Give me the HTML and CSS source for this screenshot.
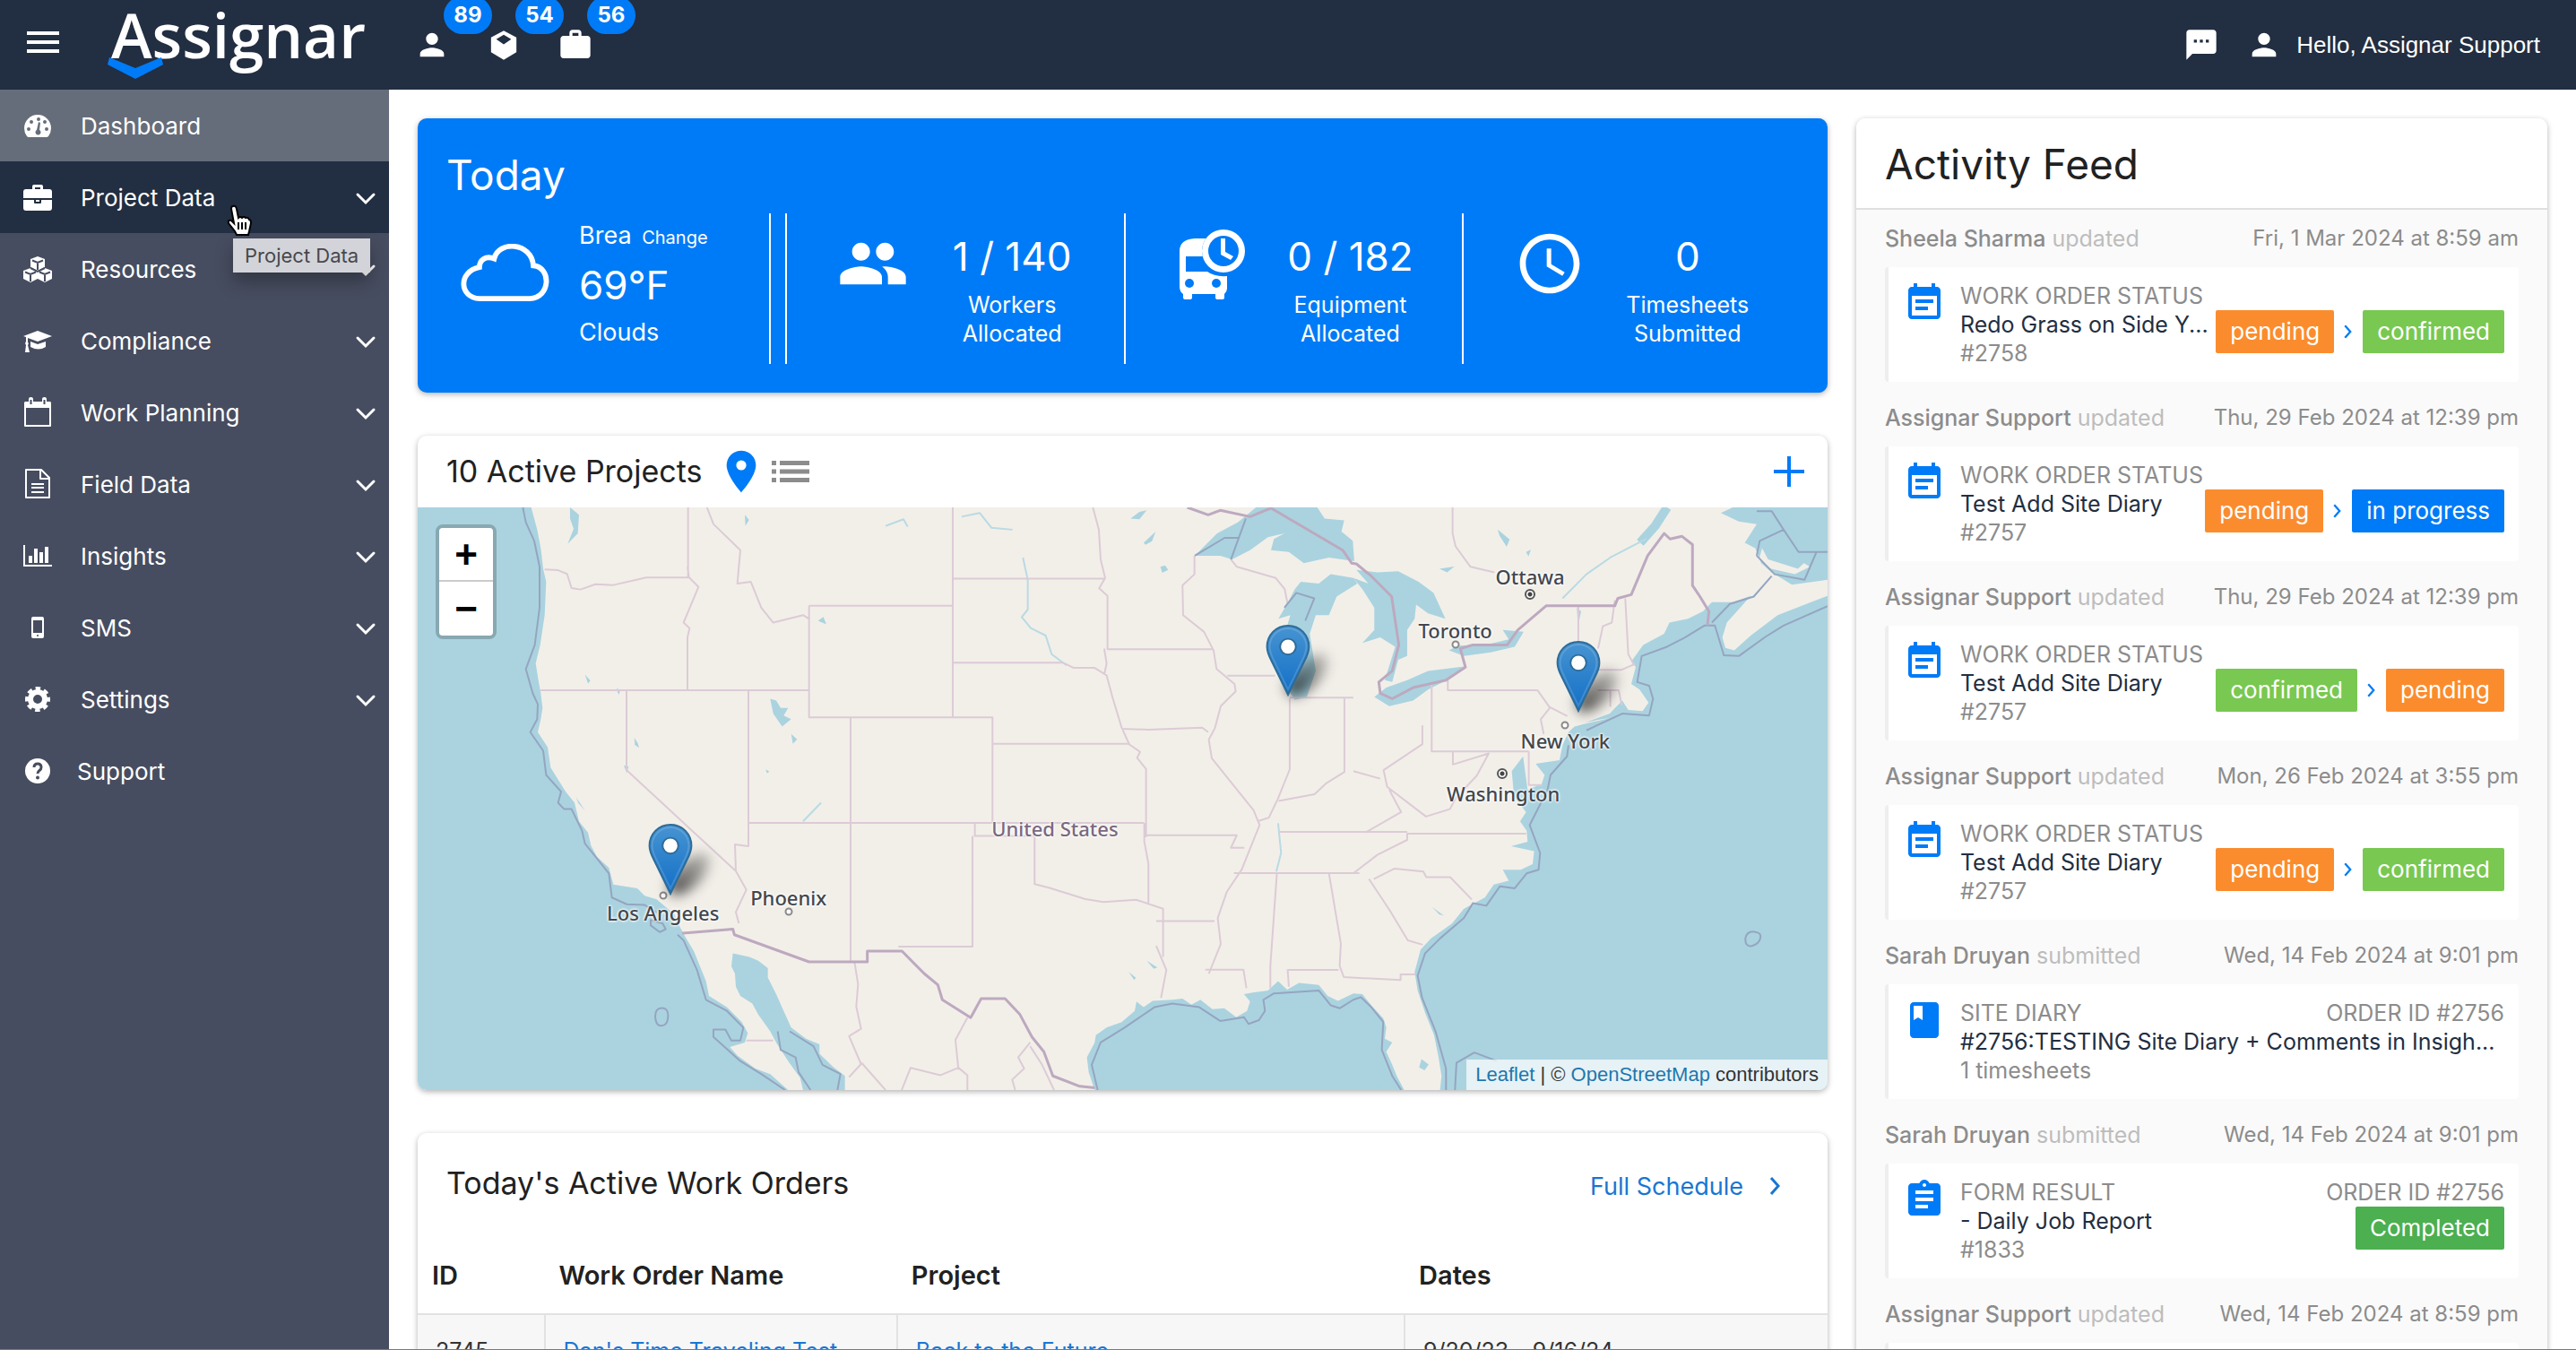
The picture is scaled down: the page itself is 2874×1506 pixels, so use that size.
FILE: index.html
```html
<!DOCTYPE html>
<html lang="en">

<head>
    <meta charset="UTF-8">
    <meta name="viewport" content="width=device-width, initial-scale=1.0">
    <title>Assignar Dashboard</title>
    <link rel="stylesheet" href="styles.css">
</head>

<body>

    <!-- Icon sprite -->
    <svg class="sprite" aria-hidden="true">
        <symbol id="menu" viewBox="0 0 24 24"><path d="M3 18h18v-2H3v2zm0-5h18v-2H3v2zm0-7v2h18V6H3z"/></symbol>
        <symbol id="person" viewBox="0 0 24 24"><path d="M12 12c2.21 0 4-1.79 4-4s-1.79-4-4-4-4 1.79-4 4 1.79 4 4 4zm0 2c-2.67 0-8 1.34-8 4v2h16v-2c0-2.66-5.33-4-8-4z"/></symbol>
        <symbol id="box" viewBox="0 0 24 24"><path d="M12 2.500 20.500 7v10L12 22 3.500 17V7zM12 5.200 7 8.300l5 3.400 5-3.400z" fill-rule="evenodd"/></symbol>
        <symbol id="bag" viewBox="0 0 24 24"><path d="M20 6h-4V4c0-1.110-.89-2-2-2h-4c-1.110 0-2 .89-2 2v2H4c-1.110 0-2 .89-2 2v11c0 1.110.89 2 2 2h16c1.110 0 2-.89 2-2V8c0-1.110-.89-2-2-2zm-6 0h-4V4h4v2z"/></symbol>
        <symbol id="chat" viewBox="0 0 24 24"><path d="M20 2H4c-1.100 0-1.990.9-1.990 2L2 22l4-4h14c1.100 0 2-.9 2-2V4c0-1.100-.9-2-2-2zM9 10.500H7v-2h2v2zm4 0h-2v-2h2v2zm4 0h-2v-2h2v2z"/></symbol>
        <symbol id="chevron-down" viewBox="0 0 24 16"><path d="M3 3l9 9 9-9" fill="none" stroke="currentColor" stroke-width="3" stroke-linecap="round"/></symbol>
        <symbol id="chevron-right" viewBox="0 0 16 24"><path d="M3 3l8 9-8 9" fill="none" stroke="currentColor" stroke-width="3"/></symbol>
        <symbol id="group" viewBox="0 0 24 24"><path d="M16 11c1.660 0 2.990-1.340 2.990-3S17.660 5 16 5c-1.660 0-3 1.340-3 3s1.340 3 3 3zm-8 0c1.660 0 2.990-1.340 2.990-3S9.660 5 8 5C6.340 5 5 6.340 5 8s1.340 3 3 3zm0 2c-2.330 0-7 1.170-7 3.500V19h14v-2.500c0-2.330-4.670-3.500-7-3.500zm8 0c-.29 0-.62.02-.97.05 1.160.84 1.970 1.970 1.970 3.450V19h6v-2.500c0-2.330-4.670-3.500-7-3.500z"/></symbol>
        <symbol id="clock" viewBox="0 0 24 24"><path d="M11.990 2C6.470 2 2 6.480 2 12s4.470 10 9.990 10C17.520 22 22 17.520 22 12S17.520 2 11.990 2zM12 20c-4.420 0-8-3.580-8-8s3.580-8 8-8 8 3.580 8 8-3.580 8-8 8zM12.500 7H11v6l5.250 3.150.75-1.230-4.500-2.670z"/></symbol>
        <symbol id="bus" viewBox="2 0 80 80">
            <path d="M6 26q0-13 17-14h14v20H13v17h24q8 6 22 5v14q0 3-3 6v4q0 2-3 2h-4q-3 0-3-2v-4H20v4q0 2-3 2h-4q-3 0-3-2v-4q-4-3-4-8z"/>
            <circle class="hole" cx="17" cy="62" r="5"/><circle class="hole" cx="47" cy="62" r="5"/>
            <circle class="hole" cx="55" cy="26" r="24"/>
            <path d="M55 2a24 24 0 100 48 24 24 0 000-48zm0 7a17 17 0 110 34 17 17 0 010-34zM52 12v18l11 6 3-4-9-5V12z" fill-rule="evenodd"/>
        </symbol>
        <symbol id="cloud" viewBox="0 0 104 68"><path d="M23 63h58c24-1 25-36 4-38C83-2 45-4 40 17 30 13 23 19 23 27-2 32 0 62 23 63z" fill="none" stroke="currentColor" stroke-width="6"/></symbol>
        <symbol id="place" viewBox="0 0 24 24"><path d="M12 2C8.130 2 5 5.130 5 9c0 5.250 7 13 7 13s7-7.750 7-13c0-3.870-3.130-7-7-7zm0 9.400A2.400 2.400 0 1112 6.600a2.400 2.400 0 010 4.800z"/></symbol>
        <symbol id="list" viewBox="0 0 42 24"><path d="M0 0h5v5H0zM9 0h33v5H9zM0 9.500h5v5H0zM9 9.500h33v5H9zM0 19h5v5H0zM9 19h33v5H9z"/></symbol>
        <symbol id="plus" viewBox="0 0 34 34"><path d="M15 0h4v15h15v4H19v15h-4V19H0v-4h15z"/></symbol>
        <symbol id="event" viewBox="0 0 24 24"><path d="M17 10H7v2h10v-2zm2-7h-1V1h-2v2H8V1H6v2H5c-1.110 0-1.990.9-1.990 2L3 19c0 1.100.89 2 2 2h14c1.100 0 2-.9 2-2V5c0-1.100-.9-2-2-2zm0 16H5V8h14v11zm-5-5H7v2h7v-2z"/></symbol>
        <symbol id="diary" viewBox="0 0 24 24"><path d="M18 2H6c-1.100 0-2 .9-2 2v16c0 1.100.9 2 2 2h12c1.100 0 2-.9 2-2V4c0-1.100-.9-2-2-2zM6 4h5v8l-2.500-1.500L6 12V4z"/></symbol>
        <symbol id="form" viewBox="0 0 24 24"><path d="M19 3h-4.180C14.400 1.840 13.300 1 12 1c-1.300 0-2.400.84-2.820 2H5c-1.100 0-2 .9-2 2v14c0 1.100.9 2 2 2h14c1.100 0 2-.9 2-2V5c0-1.100-.9-2-2-2zm-7 0c.55 0 1 .45 1 1s-.45 1-1 1-1-.45-1-1 .45-1 1-1zm2 14H7v-2h7v2zm3-4H7v-2h10v2zm0-4H7V7h10v2z"/></symbol>
        <symbol id="marker" viewBox="0 0 50 82">
            <path d="M25 1C11 1 1 12 1 25c0 7 3 12 6 18l18 37 18-37c3-6 6-11 6-18C49 12 39 1 25 1z" fill="url(#pin)" stroke="#2e6c97" stroke-width="2"/>
            <path d="M25 4C13 4 4 14 4 25c0 6 2 10 5 16l16 33 16-33c3-6 5-10 5-16C46 14 37 4 25 4z" fill="none" stroke="#fff" stroke-opacity=".15" stroke-width="2"/>
            <circle cx="25" cy="25" r="9" fill="#fff" stroke="#2e6c97" stroke-width="2"/>
        </symbol>
        <linearGradient id="pin" x1="0" y1="0" x2="0" y2="1"><stop offset="0" stop-color="#4794d2"/><stop offset="1" stop-color="#126fc6"/></linearGradient>
        <symbol id="gauge" viewBox="0 0 32 32">
            <path d="M16 4a15 15 0 00-15 15q0 5 3 9 1 1 2 1h20q1 0 2-1 3-4 3-9A15 15 0 0016 4z"/>
            <path class="hole" d="M15 9a2 2 0 114 0 2 2 0 01-4 0zM7 12a2 2 0 114 0 2 2 0 01-4 0zM22 12a2 2 0 114 0 2 2 0 01-4 0zM4 20a2 2 0 114 0 2 2 0 01-4 0zM24 20a2 2 0 114 0 2 2 0 01-4 0zM17 12l2 1-1 8a3 3 0 11-3 0z"/>
        </symbol>
        <symbol id="case" viewBox="0 0 32 32"><path d="M3 7h7V4q0-2 2-2h8q2 0 2 2v3h7q3 0 3 3v7H0v-7q0-3 3-3zm10 0h6V5h-6zM0 19h12v3q0 1 1 1h6q1 0 1-1v-3h12v9q0 3-3 3H3q-3 0-3-3zm14 0h4v2h-4z" fill-rule="evenodd"/></symbol>
        <symbol id="cubes" viewBox="0 0 32 32">
            <path d="M16 2l8 3v9l-8 4-8-4V5zM8 15l8 3v9l-8 4-8-4v-9zM24 15l8 3v9l-8 4-8-4v-9z"/>
            <path class="cut" d="M10 6.500l6 2.500 6-2.500M16 9v8M2 19.500L8 22l6-2.500M8 22v8M18 19.500l6 2.500 6-2.500M24 22v8M8 15l8 4 8-4"/>
        </symbol>
        <symbol id="cap" viewBox="0 0 32 32"><path d="M16 5l16 6-16 6-11-4v5l1 1-1 2 2 8H2l1-8-1-2 1-2v-5L0 11zM8 17l8 3 9-3v6q-8 5-17 0z"/></symbol>
        <symbol id="calendar" viewBox="0 0 32 36"><path d="M2 6h4V3q0-2 2.500-2T11 3v3h10V3q0-2 2.500-2T26 3v3h4q1 0 1 2v25q0 1-1 1H2q-1 0-1-1V8q0-2 1-2zm1 7v19h26V13z" fill-rule="evenodd"/><path class="cut" d="M8.500 4v5M23.500 4v5"/></symbol>
        <symbol id="doc" viewBox="0 0 32 36"><path d="M3 2h17l9 9v22H3zM19 2v10h10M9 18h14M9 22h14M9 27h14" fill="none" stroke="currentColor" stroke-width="2" stroke-linejoin="round"/></symbol>
        <symbol id="chart" viewBox="0 0 32 32"><path d="M0 4h2v22h30v2H0zM6 16h4v8H6zM12 8h4v16h-4zM18 12h4v12h-4zM24 6h4v18h-4z"/></symbol>
        <symbol id="phone" viewBox="0 0 32 32"><path d="M11 4h10q2 0 2 2v20q0 2-2 2H11q-2 0-2-2V6q0-2 2-2zm0 4v14h10V8zm5 16a1 1 0 100 2 1 1 0 000-2z" fill-rule="evenodd"/></symbol>
        <symbol id="gear" viewBox="0 0 32 32"><g fill="none" stroke="currentColor"><circle cx="16" cy="16" r="8" stroke-width="6"/><circle cx="16" cy="16" r="12" stroke-width="4" stroke-dasharray="5.400 4.025" stroke-dashoffset="2.700"/></g></symbol>
        <symbol id="help" viewBox="0 0 32 32"><circle cx="16" cy="16" r="14"/><path class="cut help-hook" d="M12 12q0-4 4-4t4 4q0 2-2 3.500t-2 3.500"/><circle class="hole" cx="16" cy="23.500" r="2"/></symbol>
    </svg>

    <header class="topbar">
        <button class="icon-button" type="button" aria-label="Toggle menu"><svg class="menu-icon"><use href="#menu"/></svg></button>
        <a class="logo" href="#">Assignar
            <svg class="logo-mark" viewBox="0 0 62 24" aria-hidden="true"><path d="M2 0l29 12L60 0l2 8-31 16L0 8z"/></svg>
        </a>
        <nav class="counters" aria-label="Counters">
            <a class="counter" href="#" aria-label="Workers"><svg class="counter-icon"><use href="#person"/></svg><span class="badge">89</span></a>
            <a class="counter" href="#" aria-label="Equipment"><svg class="counter-icon"><use href="#box"/></svg><span class="badge">54</span></a>
            <a class="counter" href="#" aria-label="Projects"><svg class="counter-icon"><use href="#bag"/></svg><span class="badge">56</span></a>
        </nav>
        <div class="account">
            <button class="icon-button" type="button" aria-label="Messages"><svg class="counter-icon"><use href="#chat"/></svg></button>
            <a class="user" href="#"><svg class="counter-icon"><use href="#person"/></svg>Hello, Assignar Support</a>
        </div>
    </header>

    <div class="layout">
        <nav class="sidebar" aria-label="Main">
            <a class="nav-item current" href="#"><svg class="nav-icon"><use href="#gauge"/></svg><span class="nav-label">Dashboard</span></a>
            <a class="nav-item hover" href="#"><svg class="nav-icon"><use href="#case"/></svg><span class="nav-label">Project Data</span><svg class="nav-arrow"><use href="#chevron-down"/></svg>
                <svg class="pointer" viewBox="0 0 30 36" aria-hidden="true"><path d="M8 2q3-1 4 3l2 10q2-2 4 0 2-2 4 0 3-1 4 2 2 0 2 4l-2 9-1 4H12l-2-4-7-9q-1-4 3-3l3 3L6 5q0-3 2-3z"/><path d="M14 20v8M18 20v8M22 20v8"/></svg>
                <span class="tooltip" role="tooltip">Project Data</span>
            </a>
            <a class="nav-item" href="#"><svg class="nav-icon"><use href="#cubes"/></svg><span class="nav-label">Resources</span><svg class="nav-arrow"><use href="#chevron-down"/></svg></a>
            <a class="nav-item" href="#"><svg class="nav-icon"><use href="#cap"/></svg><span class="nav-label">Compliance</span><svg class="nav-arrow"><use href="#chevron-down"/></svg></a>
            <a class="nav-item" href="#"><svg class="nav-icon tall"><use href="#calendar"/></svg><span class="nav-label">Work Planning</span><svg class="nav-arrow"><use href="#chevron-down"/></svg></a>
            <a class="nav-item" href="#"><svg class="nav-icon tall"><use href="#doc"/></svg><span class="nav-label">Field Data</span><svg class="nav-arrow"><use href="#chevron-down"/></svg></a>
            <a class="nav-item" href="#"><svg class="nav-icon"><use href="#chart"/></svg><span class="nav-label">Insights</span><svg class="nav-arrow"><use href="#chevron-down"/></svg></a>
            <a class="nav-item" href="#"><svg class="nav-icon"><use href="#phone"/></svg><span class="nav-label">SMS</span><svg class="nav-arrow"><use href="#chevron-down"/></svg></a>
            <a class="nav-item" href="#"><svg class="nav-icon"><use href="#gear"/></svg><span class="nav-label">Settings</span><svg class="nav-arrow"><use href="#chevron-down"/></svg></a>
            <a class="nav-item support" href="#"><svg class="nav-icon"><use href="#help"/></svg><span class="nav-label">Support</span></a>
        </nav>

        <main class="content">
            <div class="column">

                <section class="card today">
                    <h2 class="today-title">Today</h2>
                    <div class="today-row">
                        <div class="weather">
                            <svg class="cloud"><use href="#cloud"/></svg>
                            <div class="weather-text">
                                <p class="place">Brea <a class="change" href="#">Change</a></p>
                                <p class="temp">69°F</p>
                                <p class="sky">Clouds</p>
                            </div>
                        </div>
                        <div class="stats">
                            <div class="stat">
                                <svg class="stat-icon"><use href="#group"/></svg>
                                <div class="stat-text"><p class="stat-value">1 / 140</p><p class="stat-label">Workers<br>Allocated</p></div>
                            </div>
                            <div class="stat">
                                <svg class="stat-icon"><use href="#bus"/></svg>
                                <div class="stat-text"><p class="stat-value">0 / 182</p><p class="stat-label">Equipment<br>Allocated</p></div>
                            </div>
                            <div class="stat">
                                <svg class="stat-icon"><use href="#clock"/></svg>
                                <div class="stat-text"><p class="stat-value">0</p><p class="stat-label">Timesheets<br>Submitted</p></div>
                            </div>
                        </div>
                    </div>
                </section>

                <section class="card projects">
                    <div class="projects-head">
                        <h2 class="card-title">10 Active Projects</h2>
                        <button class="view-button active" type="button" aria-label="Map view"><svg class="place-icon"><use href="#place"/></svg></button>
                        <button class="view-button" type="button" aria-label="List view"><svg class="list-icon"><use href="#list"/></svg></button>
                        <button class="view-button active add" type="button" aria-label="Add project"><svg class="plus-icon"><use href="#plus"/></svg></button>
                    </div>
                    <div class="map">
                        <svg class="map-tiles" viewBox="0 0 4719 1568" preserveAspectRatio="none" aria-hidden="true">
                            <path class="land" d="M380 0L400 60 412 110 420 165 430 200 425 290 410 370 395 420 405 470 412 500 418 540 412 570 402 605 435 645 445 700 495 765 525 795 540 845 570 875 580 910 600 940 640 970 655 1015 735 1025 760 1045 800 1055 830 1075 860 1095 875 1125 895 1155 925 1195 945 1235 965 1275 975 1315 1035 1345 1085 1385 1105 1415 1095 1440 1045 1452 1070 1475 1130 1510 1180 1525 1240 1568H1290L1280 1535 1240 1490 1200 1440 1180 1410 1140 1365 1120 1335 1080 1315 1065 1290 1062 1255 1050 1235 1055 1200 1110 1210 1140 1220 1172 1240 1172 1265 1200 1310 1225 1355 1250 1400 1300 1430 1345 1445 1345 1470 1390 1505 1430 1530V1568
                                H2266L2246 1520 2240 1480 2266 1440 2270 1420 2306 1400 2356 1385 2400 1355 2406 1330 2430 1345 2460 1328 2526 1325 2560 1322 2590 1338 2620 1325 2660 1350 2700 1348 2740 1372 2776 1355 2786 1330 2766 1310 2800 1305 2846 1300 2880 1275 2910 1298 2950 1280 3016 1285 3046 1315 3080 1328 3132 1308
                                3162 1310 3192 1340 3232 1375 3242 1400 3237 1430 3262 1440 3242 1465 3262 1500 3277 1530 3302 1568H3422L3427 1530 3417 1480 3402 1420 3372 1360 3347 1300 3337 1250 3357 1190 3392 1160 3462 1120 3502 1080 3572 1050 3602 1015 3652 1005 3632 975 3692 975 3732 960 3737 925 3660 912 3715 900 3712 870 3690 845 3710 820 3670 780 3662 710 3700 670 3715 760 3762 745 3772 720 3742 690 3822 680 3832 640 3852 605 3872 590 3990 555 4032 520 4052 545 4100 548 4120 525 4090 490 4062 475 4077 430 4062 415 4102 370 4172 340 4190 310 4252 300 4302 280
                                4332 255 4402 255 4462 238 4382 310 4367 350 4377 378 4407 385 4462 345 4552 290 4719 238V195L4600 208 4532 175 4497 150 4477 110 4442 95 4482 45 4422 38 4362 15 4402 0Z"/>
                            <path class="land" d="M4500 110L4520 140 4620 165 4640 150 4660 160 4610 180 4530 165 4490 140zM3870 590L3990 567 3950 572 3850 588z"/>
                            <path class="water" d="M2601 130L2676 70 2746 40 2806 0H3011L3036 30 3101 35 3092 65 3130 90 3135 145 3050 135 2966 150 2916 120 2856 115 2866 85 2901 70 2846 80 2786 115 2726 140 2686 130z"/>
                            <path class="water" d="M2881 300L2910 260 2936 220 2956 200 3016 205 3056 180 3132 190 3145 205 3076 240 3050 290 3006 290 2986 340 2996 390 3006 440 2976 510 2936 518 2906 480 2896 420 2906 330 2921 290z"/>
                            <path class="water" d="M3132 190L3182 205 3142 168 3212 175 3282 172 3350 200 3400 230 3440 300 3382 285 3342 262 3337 300 3312 330 3312 400 3282 410 3262 470 3237 465 3272 375 3222 350 3162 365 3202 330 3202 270 3162 220z"/>
                            <path class="water" d="M3202 510L3242 485 3312 465 3382 440 3502 428 3452 462 3382 490 3332 520 3252 535zM3452 385L3482 372 3572 370 3652 355 3632 330 3702 335 3672 375 3592 390 3502 400zM1180 515L1200 520 1215 540 1240 540 1225 560 1250 570 1220 590 1190 555z"/>
                            <path class="water" d="M725 620l12 15 4 12-14-8zM1165 705l12 6-8 5zM1250 610l20 14-14 12zM1340 305l18-10 10 20zM1095 20l14 14-12 16zM2386 30l30-18 24-4-24 24zM2430 95l40-30-12 26-22 10zM2486 160l16-4 10 12-20 8zM560 450l18 16-8 8zM665 488l14 2-6 14zM690 695l16 2-6 18zM530 780l30 36-22-20zM3360 1485l24 14-14 16-18-8zM3395 1075l40 24-16-4zM2440 1220l36 18-12 4zM2380 1250l24 16-6 6zM510 0l30 20-4 50-34 28 20-40-12-28zM3880 270l14 10-10 40zM3615 60l40 26-10 20-24-30zM3710 120l16-6-8 18zM3420 165l50-6-24 16z"/>
                            <path class="river wide" d="M4182 0L4142 50 4092 95"/>
                            <path class="river" d="M4112 85L3992 135 3912 180 3832 245M2026 135l16 60 0 80-20 20 30 30 50 20 20 50 50 30M1821 25l60-10 40 40 70 5M1566 50l60-18 14 20M1290 845l60-50M2880 850l10 80-16 50"/>
                            <path class="state" d="M425 167l45 2 30 10 15 38 30 4 50-14 60 2 110-20h140V0M903 160l5 28 32 26-50 96 20 15-7 25v142M410 492h900M699 492v215l366 272M1107 492v420l-45-5 3 72 35 50-35 60 10 30M1310 265v300h139M1310 265h481M1310 300l-20-10-100 20-40-40-35-70-45 5 10-90-90-70-22-45M1449 565v658M1107 849h1324M1449 565h475v284M1791 0v565M1791 192h510M1791 418h370M2260 0l20 60 6 80 15 50-20 28 28 20v144h355M2298 380l8 40-8 30M2161 418l35 14h70l40 20 20 60 30 80 26 46 36 20-10 16 30 30v184M2356 596l90 2 180-5 20 12M1924 636h460M1865 849v35h200v130l50 10 120 30 60 8 110-6 90 24v130M1857 884v298h-248M2432 849v50l14 60v110M2432 882h310l-20 34h45M2472 1113h195M2472 1180l34 65-18 75M2636 1244h128l10 50M2600 130v50l-40 30 2 80 70 45 32 50 10 50 60 40 4 20-50 40-20 60-20 30 10 50 50 50 50 50 40 40 20 40-60 120-50 60-30 70 10 70-40 80M2722 140l20 20 130 30 30 30 10 40M2710 453h160M2919 515v190l-40 80-30 50-38 10M2919 512h213M3102 512v200l-60 30-40 30-120 18M2732 984h420M2876 984l-22 250v60M3050 984l40 190-4 60 14 30 190 8v-15h50M2916 1290l-4-45h170M2882 873h430M3312 878h398M3132 985l80-50 100-40V876M3184 1000l70 85 60 80 50 12M3200 1000l70-28 96 8 10 15h80l72 60M3394 475v182h325M3448 465v27h300l40 45 60 25M3789 540l-30 30 10 40M3885 265v95M4007 250l-10 60-30 10-16 60M4042 245l10 150 20 30M3950 437h80l40-14M3950 492h70l10 40M3992 492v45M3719 657v90h45M3465 657v35l120-30-40 60-70 60-20 30-80 20-130-80-12-45 130-70v-50M3252 760l40 60-120 55M3132 710l90 20M3464 0v70l10 35 50 55 80 15M1100 1435h90M1462 1223l12 60-6 60 16 60-40 20 40 75-40 35M1486 1495l80 73M1840 1373l-40 60 10 80M1620 1568l30-60 100 20 60-20 30 20v40M2050 1440l-40 40 20 30-40 30 10 28M2050 1450l40 50 40 68"/>
                            <path class="coast" d="M352 0l10 40 28 50 18 70v110l-16 100-30 65 23 65 17 30-2 40-23 35 43 50 10 65 50 45-10 30 20 17h25l35 58 10 35 40 40 40 40 10 65 50 18 60 2 40 20M870 1150l20 15 45 80 30 80 70 30 55 45-10 35h-30l-20-30h-40v20l90 65 70 35 80 43M780 1110l40 10 10 15-20 8-30-18zM1205 1410l10 50 50 20 10 40 40 48M1245 1410l80 40 30 50 60 25-10 43M795 1370q0-23 22-23t21 23-21 25-22-25
                                M2276 1568l-20-68 30-60 80-40 100-55 60-10 90 10 70 37 80-10 15 18 35-10 20-25-5-30 35-17 150-8 40 40 30 8 46-23 25-7 35 27 40 40-5 75 35 70 30 38M3442 1568v-58l-35-100-45-90-15-60 25-60 50-40 80-55 30-40 45 7 45-52 50 5 40-40 40-10 5-45-35-75 60-95 10-40 55-50 5-30M3912 600l120-45 90 5 13-45-13-35-40-10 15-70 85-25 60-25 65-32h35l30 80 50 2 90-52 60-30 147-52M3472 1568l5-73 60-28 75 23M4444 1160q5-20 30-18t20 18-28 20-22-20M4332 310l60-50 80-20 60-55M4482 130l10-40 80-30-40-50-50 0M4572 60l50 60h97M4482 130l60 50 100 15 40-75M2601 130l100-48h50M2722 140l50-110M2901 270l40-40 60 15-30 60"/>
                            <path class="border" d="M885 1146l170-11 5 15 250 73h195v-29h116l75 61 45 30 15 40 95 48 35-51h80l50 43 40 60 40 40 30 65 90 28 50 4M2576 0l70 20 40-12 100 17 70-23 240 113 30 35 16 2 50 33 68 55 24 130-22 70-45 30 5 30 40 15 70-30 110-20 65-35-17-50 42-10h115l35-40 95-65h230l10-20 45-10 55-105 55-60 20 15 40-7 35 22v110l25 30 30 40-5 38"/>
                        </svg>

                        <span class="city la">Los Angeles</span>
                        <span class="city phoenix">Phoenix</span>
                        <span class="city country">United States</span>
                        <span class="city toronto">Toronto</span>
                        <span class="city ottawa">Ottawa</span>
                        <span class="city newyork">New York</span>
                        <span class="city washington">Washington</span>
                        <span class="dot la-dot"></span>
                        <span class="dot phoenix-dot"></span>
                        <span class="dot toronto-dot"></span>
                        <span class="dot capital ottawa-dot"></span>
                        <span class="dot newyork-dot"></span>
                        <span class="dot capital washington-dot"></span>
                        <span class="pin pin-la"><svg class="marker"><use href="#marker"/></svg></span>
                        <span class="pin pin-chicago"><svg class="marker"><use href="#marker"/></svg></span>
                        <span class="pin pin-newyork"><svg class="marker"><use href="#marker"/></svg></span>

                        <div class="zoom">
                            <button class="zoom-button" type="button" aria-label="Zoom in">+</button>
                            <button class="zoom-button" type="button" aria-label="Zoom out">−</button>
                        </div>
                        <p class="attribution"><a href="#">Leaflet</a> | © <a href="#">OpenStreetMap</a> contributors</p>
                    </div>
                </section>

                <section class="card orders">
                    <div class="orders-head">
                        <h2 class="card-title">Today's Active Work Orders</h2>
                        <a class="schedule" href="#">Full Schedule <svg class="schedule-arrow"><use href="#chevron-right"/></svg></a>
                    </div>
                    <table class="orders-table">
                        <thead>
                            <tr><th class="col-id">ID</th><th class="col-name">Work Order Name</th><th class="col-project">Project</th><th>Dates</th></tr>
                        </thead>
                        <tbody>
                            <tr><td>2745</td><td><a href="#">Dan's Time Traveling Test</a></td><td><a href="#">Back to the Future</a></td><td>9/20/23 – 9/16/24</td></tr>
                        </tbody>
                    </table>
                </section>
            </div>

            <aside class="card feed">
                <h2 class="feed-title">Activity Feed</h2>
                <article class="feed-item">
                    <p class="feed-meta"><span><b>Sheela Sharma</b> updated</span><time>Fri, 1 Mar 2024 at 8:59 am</time></p>
                    <div class="feed-card">
                        <svg class="feed-icon"><use href="#event"/></svg>
                        <div class="feed-text"><p>WORK ORDER STATUS</p><p class="feed-name">Redo Grass on Side Y...</p><p>#2758</p></div>
                        <div class="feed-side"><span class="tag pending">pending</span><svg class="feed-arrow"><use href="#chevron-right"/></svg><span class="tag confirmed">confirmed</span></div>
                    </div>
                </article>
                <article class="feed-item">
                    <p class="feed-meta"><span><b>Assignar Support</b> updated</span><time>Thu, 29 Feb 2024 at 12:39 pm</time></p>
                    <div class="feed-card">
                        <svg class="feed-icon"><use href="#event"/></svg>
                        <div class="feed-text"><p>WORK ORDER STATUS</p><p class="feed-name">Test Add Site Diary</p><p>#2757</p></div>
                        <div class="feed-side"><span class="tag pending">pending</span><svg class="feed-arrow"><use href="#chevron-right"/></svg><span class="tag progress">in progress</span></div>
                    </div>
                </article>
                <article class="feed-item">
                    <p class="feed-meta"><span><b>Assignar Support</b> updated</span><time>Thu, 29 Feb 2024 at 12:39 pm</time></p>
                    <div class="feed-card">
                        <svg class="feed-icon"><use href="#event"/></svg>
                        <div class="feed-text"><p>WORK ORDER STATUS</p><p class="feed-name">Test Add Site Diary</p><p>#2757</p></div>
                        <div class="feed-side"><span class="tag confirmed">confirmed</span><svg class="feed-arrow"><use href="#chevron-right"/></svg><span class="tag pending">pending</span></div>
                    </div>
                </article>
                <article class="feed-item">
                    <p class="feed-meta"><span><b>Assignar Support</b> updated</span><time>Mon, 26 Feb 2024 at 3:55 pm</time></p>
                    <div class="feed-card">
                        <svg class="feed-icon"><use href="#event"/></svg>
                        <div class="feed-text"><p>WORK ORDER STATUS</p><p class="feed-name">Test Add Site Diary</p><p>#2757</p></div>
                        <div class="feed-side"><span class="tag pending">pending</span><svg class="feed-arrow"><use href="#chevron-right"/></svg><span class="tag confirmed">confirmed</span></div>
                    </div>
                </article>
                <article class="feed-item">
                    <p class="feed-meta"><span><b>Sarah Druyan</b> submitted</span><time>Wed, 14 Feb 2024 at 9:01 pm</time></p>
                    <div class="feed-card">
                        <svg class="feed-icon"><use href="#diary"/></svg>
                        <div class="feed-text wide"><p class="feed-line"><span>SITE DIARY</span><span>ORDER ID #2756</span></p><p class="feed-name">#2756:TESTING Site Diary + Comments in Insigh...</p><p>1 timesheets</p></div>
                    </div>
                </article>
                <article class="feed-item">
                    <p class="feed-meta"><span><b>Sarah Druyan</b> submitted</span><time>Wed, 14 Feb 2024 at 9:01 pm</time></p>
                    <div class="feed-card">
                        <svg class="feed-icon"><use href="#form"/></svg>
                        <div class="feed-text"><p>FORM RESULT</p><p class="feed-name">- Daily Job Report</p><p>#1833</p></div>
                        <div class="feed-stack"><p>ORDER ID #2756</p><span class="tag completed">Completed</span></div>
                    </div>
                </article>
                <article class="feed-item">
                    <p class="feed-meta"><span><b>Assignar Support</b> updated</span><time>Wed, 14 Feb 2024 at 8:59 pm</time></p>
                    <div class="feed-card"></div>
                </article>
            </aside>
        </main>
    </div>

</body>

</html>
```
FILE: styles.css
```css
* {
    box-sizing: border-box;
}

body {
    margin: 0;
    height: 100vh;
    display: flex;
    flex-direction: column;
    overflow: hidden;
    font-family: Inter, 'Open Sans', sans-serif;
    font-size: 25px;
    color: #212121;
    background: #fff;
    border-bottom: 1px solid #77797d;
}

p,
h2 {
    margin: 0;
    font-weight: 400;
}

a {
    color: inherit;
    text-decoration: none;
}

button {
    padding: 0;
    border: 0;
    background: none;
    color: inherit;
    font: inherit;
}

svg {
    display: block;
    fill: currentColor;
    flex: none;
}

.sprite {
    position: absolute;
    width: 0;
    height: 0;
}

.hole {
    fill: var(--back);
}

.cut {
    fill: none;
    stroke: var(--back);
    stroke-width: 2px;
}

.help-hook {
    stroke-width: 3px;
}

/* Top bar */

.topbar {
    flex: none;
    height: 100px;
    display: flex;
    align-items: center;
    padding: 0 40px 0 24px;
    background: #222e41;
    color: #fff;
}

.topbar > .icon-button {
    padding-bottom: 6px;
}

.menu-icon {
    width: 48px;
    height: 48px;
    stroke: currentColor;
    stroke-width: 0;
}

.logo {
    position: relative;
    margin-left: 48px;
    padding: 0 54px 24px 4px;
    font: 600 69px/84px 'Open Sans', sans-serif;
}

.logo-mark {
    position: absolute;
    left: 0;
    bottom: 16px;
    width: 62px;
    height: 24px;
    color: #007bf7;
}

.counters {
    display: flex;
    gap: 40px;
    height: 100%;
}

.counter {
    position: relative;
    display: flex;
    align-items: center;
}

.counter-icon {
    width: 40px;
    height: 40px;
}

.badge {
    position: absolute;
    left: 33px;
    top: -4px;
    width: 54px;
    height: 42px;
    border-radius: 21px;
    background: #007bf7;
    font-size: 24px;
    font-weight: 700;
    line-height: 42px;
    text-align: center;
}

.account {
    display: flex;
    align-items: center;
    gap: 30px;
    margin-left: auto;
}

.user {
    display: flex;
    align-items: center;
    gap: 16px;
    font: 26px 'Liberation Sans', Arial, sans-serif;
}

.layout {
    flex: 1;
    display: flex;
    min-height: 0;
}

/* Sidebar */

.sidebar {
    --back: #474d60;
    flex: none;
    width: 434px;
    background: #474d60;
    color: #fff;
}

.nav-item {
    position: relative;
    display: flex;
    align-items: center;
    gap: 32px;
    height: 80px;
    padding: 0 14px 0 26px;
    font-size: 26px;
}

.nav-item.support {
    gap: 28px;
}

.nav-item.current {
    --back: #666d7a;
    background: #666d7a;
}

.nav-item.hover {
    --back: #222e41;
    background: #222e41;
}

.nav-icon {
    width: 32px;
    height: 32px;
}

.nav-icon.tall {
    height: 36px;
}

.nav-label {
    flex: 1;
}

.nav-arrow {
    width: 24px;
    height: 16px;
    margin-top: 4px;
}

.pointer {
    position: absolute;
    left: 252px;
    top: 48px;
    z-index: 2;
    width: 30px;
    height: 36px;
    fill: #fff;
    stroke: #000;
    stroke-width: 2px;
}

.tooltip {
    position: absolute;
    left: 260px;
    top: 86px;
    z-index: 1;
    padding: 0 13px;
    background: #d3d4d9;
    color: #47484c;
    font-size: 22px;
    line-height: 38px;
    white-space: nowrap;
    box-shadow: 0 10px 20px rgba(0, 0, 0, 0.3);
}

/* Dashboard */

.content {
    flex: 1;
    min-width: 0;
    display: grid;
    grid-template-columns: minmax(0, 51fr) minmax(0, 25fr);
    align-items: start;
    gap: 32px;
    padding: 32px;
    overflow: hidden;
}

.card {
    border-radius: 10px;
    background: #fff;
    box-shadow: 0 2px 6px rgba(0, 0, 0, 0.3);
}

.card-title {
    font-size: 34px;
    line-height: 40px;
}

.today {
    --back: #007bf7;
    padding: 36px 32px 32px;
    background: #007bf7;
    color: #fff;
}

.today-title {
    margin-bottom: 16px;
    font-size: 46px;
    line-height: 54px;
}

.today-row {
    display: flex;
    gap: 16px;
    height: 168px;
}

.weather {
    flex: none;
    width: 362px;
    display: flex;
    gap: 32px;
    padding-left: 14px;
    border-right: 2px solid #fff;
}

.cloud {
    width: 102px;
    height: 66px;
    margin-top: 34px;
}

.place,
.sky {
    font-size: 27px;
    line-height: 50px;
}

.change {
    margin-left: 4px;
    font-size: 20px;
}

.temp {
    font-size: 44px;
    line-height: 56px;
}

.stats {
    flex: 1;
    display: grid;
    grid-template-columns: repeat(3, 1fr);
    border-left: 2px solid #fff;
}

.stat {
    display: flex;
    gap: 30px;
    padding: 16px 40px 0 56px;
}

.stat + .stat {
    border-left: 2px solid #fff;
}

.stat-icon {
    width: 80px;
    height: 80px;
}

.stat-text {
    flex: 1;
    text-align: center;
}

.stat-value {
    margin-bottom: 6px;
    font-size: 44px;
    line-height: 64px;
}

.stat-label {
    font-size: 25px;
    line-height: 32px;
}

/* Projects map */

.projects {
    margin-top: 48px;
    overflow: hidden;
}

.projects-head {
    display: flex;
    align-items: center;
    height: 80px;
    padding: 0 26px 0 32px;
}

.projects-head .card-title {
    margin-right: 16px;
}

.view-button {
    color: #8c8c8c;
}

.view-button.active {
    color: #007bf7;
}

.view-button.add {
    margin-left: auto;
}

.place-icon {
    width: 56px;
    height: 56px;
}

.list-icon {
    width: 42px;
    height: 24px;
    margin-left: 6px;
}

.plus-icon {
    width: 34px;
    height: 34px;
}

.map {
    position: relative;
    height: 650px;
    overflow: hidden;
    background: #aad3df;
}

.map-tiles {
    width: 100%;
    height: 100%;
}

.map-tiles path {
    vector-effect: non-scaling-stroke;
}

.map-tiles .land {
    fill: #f2efe9;
}

.map-tiles .water {
    fill: #aad3df;
}

.map-tiles .river,
.map-tiles .state,
.map-tiles .coast,
.map-tiles .border {
    fill: none;
    stroke-linejoin: round;
}

.map-tiles .river {
    stroke: #b9dae3;
    stroke-width: 2px;
}

.map-tiles .river.wide {
    stroke: #aad3df;
    stroke-width: 10px;
}

.map-tiles .state {
    stroke: #dccbd6;
    stroke-width: 2px;
}

.map-tiles .coast {
    stroke: #95a5c0;
    stroke-width: 2px;
}

.map-tiles .border {
    stroke: #bda9bf;
    stroke-width: 3px;
}

.city,
.dot {
    position: absolute;
    transform: translate(-50%, -50%);
}

.city {
    font: 500 22px/30px 'Noto Sans', sans-serif;
    color: #42474d;
    white-space: nowrap;
    text-shadow: 0 0 3px #fff, 0 0 3px #fff, 0 0 3px #fff;
}

.country {
    left: 45.2%;
    top: 55%;
    color: #7a6880;
}

.la {
    left: 17.4%;
    top: 69.5%;
}

.phoenix {
    left: 26.3%;
    top: 66.9%;
}

.toronto {
    left: 73.6%;
    top: 21.1%;
}

.ottawa {
    left: 78.9%;
    top: 11.9%;
}

.newyork {
    left: 81.4%;
    top: 40%;
}

.washington {
    left: 77%;
    top: 49%;
}

.dot {
    width: 9px;
    height: 9px;
    border: 2px solid #8a8a8a;
    border-radius: 50%;
    background: #fff;
}

.dot.capital {
    width: 12px;
    height: 12px;
    border-color: #555;
    background: radial-gradient(#444 0 2px, #fff 3px);
}

.la-dot {
    left: 17.4%;
    top: 66.6%;
}

.phoenix-dot {
    left: 26.3%;
    top: 69.4%;
}

.toronto-dot {
    left: 73.6%;
    top: 23.5%;
}

.ottawa-dot {
    left: 78.9%;
    top: 14.9%;
}

.newyork-dot {
    left: 81.4%;
    top: 37.4%;
}

.washington-dot {
    left: 76.9%;
    top: 45.7%;
}

.pin {
    position: absolute;
    transform: translate(-50%, -100%);
}

/* Soft shadow that falls to the right of the pin */
.pin::before {
    content: '';
    position: absolute;
    left: 16px;
    bottom: 10px;
    width: 60px;
    height: 28px;
    border-radius: 50%;
    background: linear-gradient(90deg, rgba(0, 0, 0, 0.7), rgba(0, 0, 0, 0.2));
    filter: blur(7px);
    transform: rotate(-46deg);
}

.marker {
    position: relative;
    width: 50px;
    height: 80px;
}

.pin-la {
    left: 17.9%;
    top: 66.6%;
}

.pin-chicago {
    left: 61.7%;
    top: 32.5%;
}

.pin-newyork {
    left: 82.3%;
    top: 35.3%;
}

.zoom {
    position: absolute;
    left: 20px;
    top: 19px;
    border: 4px solid rgba(0, 0, 0, 0.2);
    border-radius: 8px;
    background-clip: padding-box;
}

.zoom-button {
    display: block;
    width: 60px;
    height: 60px;
    background: #fff;
    color: #000;
    font: bold 44px/60px 'Liberation Sans', Arial, sans-serif;
}

.zoom-button:first-child {
    border-bottom: 2px solid #ccc;
    border-radius: 4px 4px 0 0;
}

.zoom-button:last-child {
    border-radius: 0 0 4px 4px;
}

.attribution {
    position: absolute;
    right: 0;
    bottom: 0;
    padding: 0 10px;
    background: rgba(255, 255, 255, 0.7);
    color: #333;
    font: 22px/34px 'Liberation Sans', Arial, sans-serif;
}

.attribution a {
    color: #1f77ad;
}

/* Work orders */

.orders {
    margin-top: 48px;
    overflow: hidden;
}

.orders-head {
    display: flex;
    align-items: center;
    justify-content: space-between;
    height: 112px;
    padding: 0 50px 0 32px;
}

.schedule {
    display: flex;
    align-items: center;
    gap: 28px;
    padding-top: 6px;
    color: #1976d2;
    font-size: 27px;
}

.schedule-arrow {
    width: 16px;
    height: 24px;
}

.orders-table {
    width: 100%;
    border-collapse: collapse;
    table-layout: fixed;
    text-align: left;
}

.col-id {
    width: 9%;
}

.col-name {
    width: 25%;
}

.col-project {
    width: 36%;
}

.orders-table th {
    height: 90px;
    padding: 4px 16px 0;
    border-bottom: 2px solid #e2e2e2;
    font-size: 29px;
    font-weight: 600;
}

.orders-table td {
    height: 80px;
    padding: 0 20px;
    background: #f7f7f7;
    color: #333;
    font-size: 25px;
}

.orders-table td + td {
    border-left: 2px solid #e2e2e2;
}

.orders-table td a {
    color: #1976d2;
}

/* Activity feed */

.feed {
    background: #fafafa;
    color: #8c8c8c;
}

.feed-title {
    height: 102px;
    padding: 0 32px;
    border-bottom: 2px solid #e0e0e0;
    border-radius: 10px 10px 0 0;
    background: #fff;
    color: #212121;
    font-size: 46px;
    line-height: 102px;
}

.feed-item {
    padding: 0 32px 8px;
}

.feed-meta {
    display: flex;
    justify-content: space-between;
    line-height: 64px;
    color: #bdbdbd;
}

.feed-meta b {
    font-weight: 500;
    color: #8c8c8c;
}

.feed-meta time {
    font-size: 24px;
    color: #8c8c8c;
}

.feed-card {
    display: flex;
    height: 128px;
    padding: 16px 16px 0;
    border-left: 4px solid #eee;
    border-radius: 4px;
    background: #fff;
    line-height: 32px;
    white-space: nowrap;
}

.feed-icon {
    width: 48px;
    height: 48px;
    color: #007bf7;
}

.feed-text {
    margin-left: 16px;
}

.feed-text.wide {
    flex: 1;
}

.feed-line {
    display: flex;
    justify-content: space-between;
}

.feed-name {
    color: #222e41;
}

.feed-side {
    display: flex;
    align-items: center;
    height: 48px;
    margin: 32px 0 0 auto;
}

.feed-arrow {
    width: 12px;
    height: 18px;
    margin: 0 10px;
    color: #007bf7;
}

.feed-stack {
    display: flex;
    flex-direction: column;
    align-items: flex-end;
    margin-left: auto;
}

.tag {
    padding: 0 16px;
    border-radius: 2px;
    color: #fff;
    font-size: 26px;
    line-height: 48px;
}

.tag.pending {
    background: #fb8c2e;
}

.tag.confirmed {
    background: #79c851;
}

.tag.progress {
    background: #007bf7;
}

.tag.completed {
    background: #4caf50;
}
```
